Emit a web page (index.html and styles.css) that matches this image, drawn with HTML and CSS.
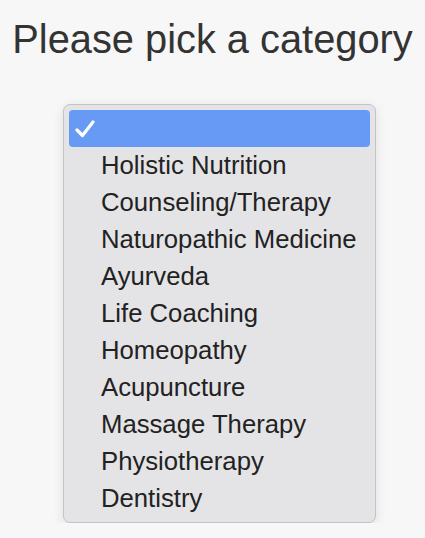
FILE: index.html
```html
<!DOCTYPE html>
<html>
<head>
<meta charset="utf-8">
<link rel="stylesheet" href="styles.css">
</head>
<body>
<div class="page">
  <h1 class="title">Please pick a category</h1>
  <div class="menu">
    <div class="option selected">
      <svg class="check" width="20" height="18" viewBox="0 0 20 18"><path d="M2 10 L7.5 15.5 L18 2" fill="none" stroke="#fff" stroke-width="3.2" stroke-linecap="round" stroke-linejoin="round"/></svg>
    </div>
    <div class="option">Holistic Nutrition</div>
    <div class="option">Counseling/Therapy</div>
    <div class="option">Naturopathic Medicine</div>
    <div class="option">Ayurveda</div>
    <div class="option">Life Coaching</div>
    <div class="option">Homeopathy</div>
    <div class="option">Acupuncture</div>
    <div class="option">Massage Therapy</div>
    <div class="option">Physiotherapy</div>
    <div class="option">Dentistry</div>
  </div>
</div>
</body>
</html>
```
FILE: styles.css
```css
html, body {
  margin: 0;
  padding: 0;
  background: #f7f7f7;
}
.page {
  display: flex;
  flex-direction: column;
  font-family: "Liberation Sans", Arial, sans-serif;
}
.title {
  margin: 19px 0 0 0;
  font-size: 39.8px;
  font-weight: normal;
  line-height: 40px;
  color: #333;
  text-align: center;
}
.menu {
  margin: 45px 0 0 63px;
  width: 301px;
  padding: 5px;
  border: 1px solid #c4c4c6;
  border-radius: 7px;
  background: #e4e4e6;
  box-shadow: 0 3px 12px rgba(0, 0, 0, 0.10);
}
.option {
  height: 37px;
  line-height: 37px;
  padding-left: 32px;
  font-size: 25.7px;
  color: #222;
  border-radius: 4px;
  display: flex;
  align-items: center;
  white-space: nowrap;
}
.option.selected {
  background: #679af5;
  padding-left: 6px;
}
.check {
  display: block;
}
```
